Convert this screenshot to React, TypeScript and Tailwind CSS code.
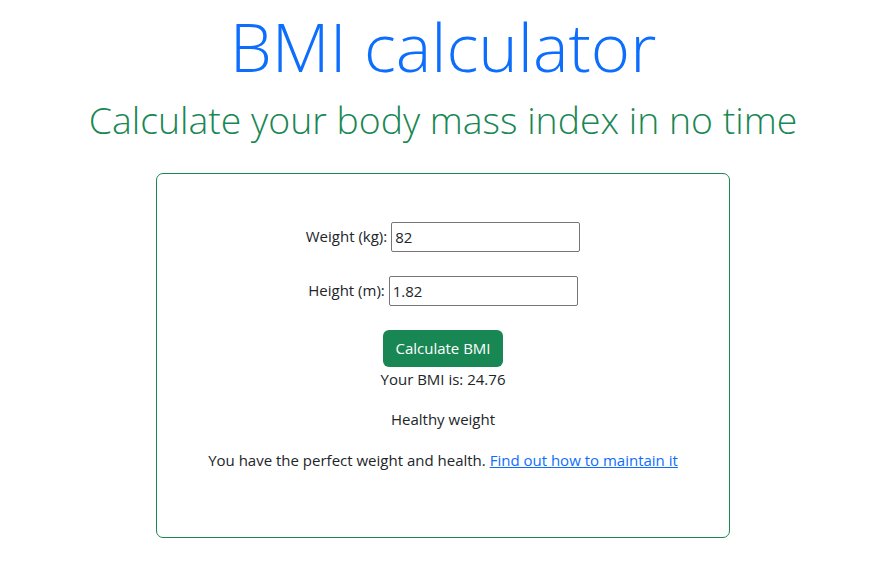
import React from 'react';

const font = { fontFamily: '"Open Sans", "Noto Sans", sans-serif' };

export default function App() {
  const [weight, setWeight] = React.useState('82');
  const [height, setHeight] = React.useState('1.82');

  return (
    <div className="min-h-[587px] w-full bg-white pl-[11px] text-[#212529]" style={font}>
      <div className="flex flex-col items-center">
        <h1 className="mt-[10px] text-[67px] font-light leading-[1.1] text-[#0d6efd]">BMI calculator</h1>
        <h2 className="mt-[14px] text-[37.4px] font-light leading-[1.2] text-[#198754]">
          Calculate your body mass index in no time
        </h2>

        <div className="mt-[30px] flex w-[574px] flex-col items-center rounded-[7px] border border-[#198754] pb-[65px] pt-[48px] text-[15px]">
          <div className="flex h-[30px] items-center gap-[4px]">
            <label htmlFor="weight">Weight (kg):</label>
            <input
              id="weight"
              value={weight}
              onChange={(e) => setWeight(e.target.value)}
              className="h-[30px] w-[189px] rounded-[2px] border border-[#767676] px-[3px] text-[15px] outline-none"
            />
          </div>
          <div className="mt-[24px] flex h-[30px] items-center gap-[4px]">
            <label htmlFor="height">Height (m):</label>
            <input
              id="height"
              value={height}
              onChange={(e) => setHeight(e.target.value)}
              className="h-[30px] w-[189px] rounded-[2px] border border-[#767676] px-[3px] text-[15px] outline-none"
            />
          </div>

          <button className="mt-[24px] h-[37px] rounded-[6px] bg-[#198754] px-[12px] text-[15px] text-white">
            Calculate BMI
          </button>
          <p className="leading-[24px]">Your BMI is: 24.76</p>
          <p className="mt-[16px] leading-[24px]">Healthy weight</p>
          <p className="mt-[17px] leading-[24px]">
            You have the perfect weight and health.{' '}
            <a href="#" className="text-[#0d6efd] underline">
              Find out how to maintain it
            </a>
          </p>
        </div>
      </div>
    </div>
  );
}
